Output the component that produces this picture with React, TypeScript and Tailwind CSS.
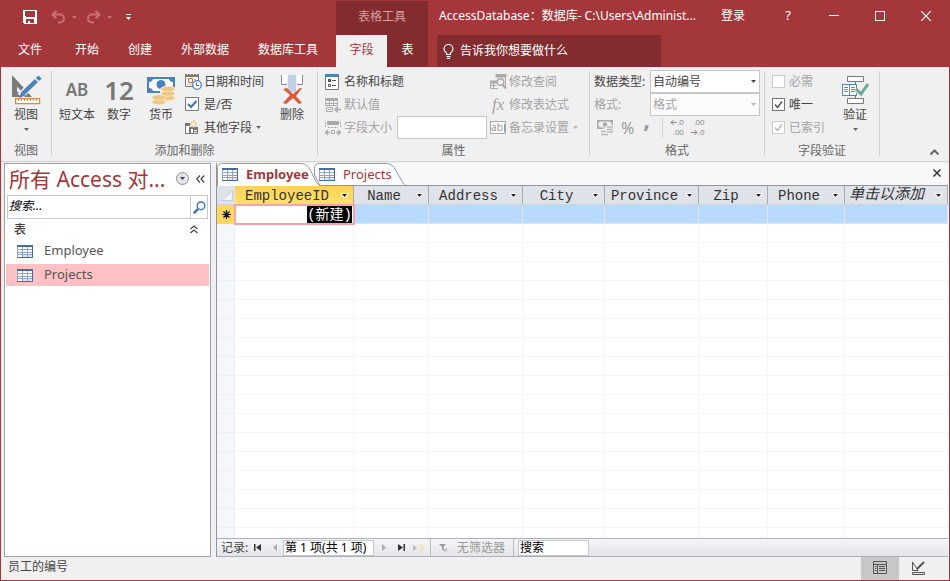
import { useState } from "react";
import type { ReactNode } from "react";
import { clsx } from "clsx";

const COLUMNS = [
  { name: "EmployeeID", width: "w-[119px]" },
  { name: "Name", width: "w-[75px]" },
  { name: "Address", width: "w-[94px]" },
  { name: "City", width: "w-[82px]" },
  { name: "Province", width: "w-[94px]" },
  { name: "Zip", width: "w-[69px]" },
  { name: "Phone", width: "w-[77px]" },
];

const MENU_TABS = ["开始", "创建", "外部数据", "数据库工具"];
const TABLES = ["Employee", "Projects"];
const EMPTY_ROWS = 60;

function Caret({ className }: { className?: string }) {
  return (
    <svg className={clsx("shrink-0", className)} width="5" height="3" viewBox="0 0 5 3" fill="currentColor">
      <path d="M0 0h5L2.5 3z" />
    </svg>
  );
}

/* ---------- Title bar icons ---------- */

function SaveIcon() {
  return (
    <svg width="14" height="14" viewBox="0 0 14 14" shapeRendering="crispEdges">
      <path fill="#fff" fillRule="evenodd" d="M0 0h14v14H1L0 13zM2 1v5l1 1h8l1-1V1zM3 9v4h2v-2h2v2h4V9z" />
    </svg>
  );
}

function UndoIcon({ flip }: { flip?: boolean }) {
  return (
    <svg
      className={flip ? "-scale-x-100" : undefined}
      width="15"
      height="14"
      viewBox="0 0 15 14"
      fill="none"
      stroke="#c9706f"
      strokeWidth="2"
    >
      <path d="M5.5 1 1.5 4.5l4 4M1.5 4.5H9a4 4 0 0 1 0 8H7" />
    </svg>
  );
}

function BulbIcon() {
  return (
    <svg width="11" height="15" viewBox="0 0 11 15" fill="none" stroke="#fff" strokeWidth="1.2">
      <path d="M3.5 10.5V9C2 8 1 6.7 1 5a4.5 4.5 0 0 1 9 0c0 1.7-1 3-2.5 4v1.5zM3.5 12.5h4M4 14.3h3" />
    </svg>
  );
}

/* ---------- Ribbon icons ---------- */

function DesignViewIcon() {
  return (
    <svg width="31" height="30" viewBox="0 0 31 30">
      <path fill="#7a7a7a" fillRule="evenodd" d="M1 0v22h20zM6 11.5V17h5z" />
      <path stroke="#f0f0f0" strokeWidth="7" d="m9 21 19-18" />
      <path stroke="#4a82bd" strokeWidth="4.5" d="M12 18.5 25.5 5.5M26.5 4.5 29 2" />
      <path fill="#4a82bd" d="m8 23 2.5-6.5 4 4z" />
      <path stroke="#f0f0f0" d="m24 3.5 4 4" />
      <path fill="#fff" stroke="#e0883c" strokeWidth="1.3" d="M4.6 23.6h24v5h-24z" />
      <path stroke="#e0883c" d="M7.5 24v2M10.5 24v2M13.5 24v2M16.5 24v2M19.5 24v2M22.5 24v2M25.5 24v2" />
    </svg>
  );
}

function CurrencyIcon() {
  return (
    <svg width="29" height="29" viewBox="0 0 29 29">
      <path fill="#4a82bd" d="M0 1h28v16H0z" />
      <path fill="#fff" d="M6 3h16a4 4 0 0 0 4 3v6a4 4 0 0 0-4 3H6a4 4 0 0 0-4-3V6a4 4 0 0 0 4-3z" />
      <circle cx="14" cy="8.5" r="4.5" fill="#4a82bd" />
      <path fill="#f0f0f0" d="M13 13c2-4 14-4 16 0v14H20v3H4v-9l4-3h5z" />
      <g fill="#efc67f" stroke="#f7ead0" strokeWidth=".8">
        <ellipse cx="21" cy="22" rx="7" ry="2.7" />
        <ellipse cx="21" cy="17.5" rx="7" ry="2.7" />
        <ellipse cx="21" cy="13" rx="7" ry="2.7" />
        <ellipse cx="12" cy="26" rx="7" ry="2.7" />
        <ellipse cx="12" cy="21.5" rx="7" ry="2.7" />
      </g>
    </svg>
  );
}

function DateIcon() {
  return (
    <svg width="17" height="17" viewBox="0 0 17 17">
      <path fill="#fff" stroke="#777" d="M.5 2.5h13v11H.5z" />
      <path fill="#777" d="M0 1h14v3H0z" />
      <path fill="#fff" d="M2 1h1v1H2zM5 1h1v1H5zM8 1h1v1H8zM11 1h1v1h-1z" />
      <path fill="#bbb" d="M9 6h2v1H9zM2 11h2v1H2zM5 11h2v1H5z" />
      <path fill="none" stroke="#e0702f" d="M3.5 5.5h4v4h-4z" />
      <circle cx="12" cy="12" r="4.3" fill="#fff" stroke="#4a82bd" strokeWidth="1.3" />
      <path fill="none" stroke="#666" d="M11.5 9.5v3H14" />
    </svg>
  );
}

function YesNoIcon() {
  return (
    <svg width="15" height="15" viewBox="0 0 15 15">
      <path fill="#fff" stroke="#777" d="M.5.5h13v13H.5z" />
      <path fill="none" stroke="#3f76b3" strokeWidth="2.2" d="m3 7 3 3 5.5-6" />
    </svg>
  );
}

function MoreFieldsIcon() {
  return (
    <svg width="15" height="15" viewBox="0 0 15 15">
      <path fill="#777" d="M0 3h5v3H0zM4 7h9v7H4zM0 6h1v8H0zM0 13h13v1H0z" />
      <path fill="#fff" d="M1 6h3v3H1zM1 10h3v3H1zM6 9h2v4H6zM9 10h3v1H9zM9 12h3v1H9z" />
      <path stroke="#f0b35f" d="M8.5 0v8M5 4h7M6 1.5l5 5M11 1.5l-5 5" />
      <circle cx="8.5" cy="4" r="1.5" fill="#fff" />
    </svg>
  );
}

function DeleteIcon() {
  return (
    <svg width="24" height="30" viewBox="0 0 24 30">
      <path fill="#fff" d="M1 0h6v9H1zM17 0h6v9h-6z" />
      <path fill="none" stroke="#8a8a8a" d="M1.5 0v9.5H7M22.5 0v9.5H17" />
      <path fill="#bed1e8" d="M8 0h8v17H8z" />
      <path fill="#dd5b3d" d="m3 14 4-1 6 6 7-6h2l-6 8 6 7-3 1-6-6-7 6-3-1 7-8z" />
    </svg>
  );
}

function CaptionIcon() {
  return (
    <svg width="15" height="16" viewBox="0 0 15 16">
      <path fill="#fff" stroke="#777" d="M.5.5h13v15H.5z" />
      <path fill="#4a82bd" d="M0 0h14v3H0z" />
      <path fill="none" stroke="#555" d="M7 6.5h4M7 11.5h4M3.5 10.5h2v2h-2z" />
      <path fill="#555" d="M3 5h3v3H3z" />
    </svg>
  );
}

function DefaultValueIcon() {
  return (
    <svg width="16" height="16" viewBox="0 0 16 16" fill="none" stroke="#aaa">
      <path fill="#aaa" d="M.5 1.5h12v2H.5z" />
      <path d="M.5 4.5v4h12v-4M4.5 4v4M8.5 4v4M.5 6.5h12" />
      <path d="M1.5 10.5h6v4h-6zM3 12.5h3" />
      <path strokeWidth="1.5" d="M16 12.5h-5.5M13 9.5l-3 3 3 3" />
    </svg>
  );
}

function FieldSizeIcon() {
  return (
    <svg width="16" height="16" viewBox="0 0 16 16" fill="none" stroke="#aaa">
      <path fill="#aaa" d="M2.5 1.5h11v3h-11z" />
      <path d="M.5 7V.5M15.5 7V.5M3 7.5h10" strokeDasharray="2 1" />
      <path d="M6.5 10.5h3v3h-3z" />
      <path strokeWidth="1.3" d="M5 12.5H1M3 10 .5 12.5 3 15M11 12.5h4M13 10l2.5 2.5L13 15" />
    </svg>
  );
}

function LookupIcon() {
  return (
    <svg width="17" height="16" viewBox="0 0 17 16" fill="none" stroke="#aaa">
      <path d="M6.5.5h9v13" />
      <path fill="#aaa" d="M6 0h10v3H6zM0 7h7v2H0z" />
      <path d="M.5 9v5.5H8M.5 11.5h6M3.5 9v5" />
      <circle cx="10.5" cy="8" r="3.3" fill="#f0f0f0" strokeWidth="1.4" />
      <path strokeWidth="2.2" d="m12.5 10.5 3.5 4" />
    </svg>
  );
}

function MemoIcon() {
  return (
    <span className="flex h-[13px] w-4 items-center justify-center gap-px border border-[#aaa] bg-[#fafafa] text-[10px] leading-[9px] text-[#999]">
      ab
      <span className="h-2 w-px bg-[#999]" />
    </span>
  );
}

function ValidationIcon() {
  return (
    <svg width="27" height="28" viewBox="0 0 27 28" fill="none">
      <path stroke="#777" d="M13.5 5v18" />
      <path fill="#fff" stroke="#777" d="M5.5.5h16v5h-16zM5.5 22.5h16v5h-16z" />
      <path fill="#fff" stroke="#4a82bd" d="M.5 8.5h14v11H.5z" />
      <path stroke="#888" d="M7.5 9v10M2 11.5h4M2 13.5h4M2 15.5h4M9 11.5h4M9 13.5h4M9 15.5h4" />
      <path stroke="#f0f0f0" strokeWidth="5" d="m14 13 5 5 6.5-9" />
      <path stroke="#6fa898" strokeWidth="3" d="m14 13 5 5 7-10" />
    </svg>
  );
}

function SmallCurrencyIcon() {
  return (
    <svg width="17" height="16" viewBox="0 0 17 16">
      <path fill="#aaa" d="M0 0h16v9H0z" />
      <path fill="#f0f0f0" d="M3 1.5h10l1.5 1.5v3L13 7.5H3L1.5 6V3z" />
      <circle cx="8" cy="4.5" r="2.2" fill="#aaa" />
      <path fill="#f0f0f0" d="M8 8 10 5h7v10H3v-5z" />
      <path stroke="#bbb" strokeWidth="1.5" d="M10 7h6M10 9.5h6M10 12h6M4 11.5h5M4 14.5h7" />
    </svg>
  );
}

function DecimalIcon({ increase }: { increase?: boolean }) {
  const arrow = (
    <svg width="7" height="7" viewBox="0 0 7 7" fill="none" stroke="currentColor">
      <path d={increase ? "M7 3.5H1M3.5 1 1 3.5 3.5 6" : "M0 3.5h6M3.5 1 6 3.5 3.5 6"} />
    </svg>
  );
  return (
    <span className="flex flex-col items-end font-['Liberation_Sans',sans-serif] text-[8px] leading-[10px] text-[#888]">
      <span className="flex h-[10px] items-center">{increase ? <>{arrow}.0</> : ".00"}</span>
      <span className="flex h-[10px] items-center">{increase ? ".00" : <>{arrow}.0</>}</span>
    </span>
  );
}

function TableIcon() {
  return (
    <svg className="shrink-0" width="16" height="13" viewBox="0 0 16 13" shapeRendering="crispEdges">
      <path fill="#8fa5c6" d="M0 0h16v13H0z" />
      <path fill="#466ba6" d="M0 0h16v2H0zM15 0h1v13h-1zM0 12h16v1H0z" />
      <path
        fill="#fff"
        d="M1 2h4v2H1zM6 2h4v2H6zM11 2h4v2h-4zM1 5h4v2H1zM6 5h4v2H6zM11 5h4v2h-4zM1 8h4v1H1zM6 8h4v1H6zM11 8h4v1h-4zM1 10h4v2H1z"
      />
      <path fill="#dce6f4" d="M6 10h4v2H6zM11 10h4v2h-4z" />
    </svg>
  );
}

function FilterIcon() {
  return (
    <svg width="9" height="8" viewBox="0 0 9 8" fill="#999">
      <path d="M0 0h7L4.5 3v4L3 5.5V3z" />
      <path stroke="#999" d="m5 4.5 3 3M8 4.5l-3 3" />
    </svg>
  );
}

/* ---------- Ribbon building blocks ---------- */

function RibbonGroup({ label, width, children }: { label: string; width: string; children: ReactNode }) {
  return (
    <section aria-label={label} className={clsx("flex shrink-0", width)}>
      <div className="flex min-w-0 flex-1 flex-col">
        <div className="flex flex-1 pt-[3px]">{children}</div>
        <div className="h-[21px] text-center leading-[22px] text-[#666]">{label}</div>
      </div>
      <div className="mt-1 mb-[5px] w-px bg-[#d2d2d2]" />
    </section>
  );
}

function LargeButton({ icon, label, menu }: { icon: ReactNode; label: string; menu?: boolean }) {
  return (
    <button type="button" className="flex w-[42px] shrink-0 flex-col items-center justify-start pt-1 text-[#444]">
      <span className="flex h-8 items-center justify-center">{icon}</span>
      <span className="leading-[18px] whitespace-nowrap">{label}</span>
      {menu && <Caret className="mt-1 text-[#666]" />}
    </button>
  );
}

type SmallButtonProps = { icon: ReactNode; label: string; menu?: boolean; disabled?: boolean };

function SmallButton({ icon, label, menu, disabled }: SmallButtonProps) {
  return (
    <button
      type="button"
      disabled={disabled}
      className={clsx("flex h-[23px] items-center whitespace-nowrap", disabled ? "text-[#a3a3a3]" : "text-[#444]")}
    >
      <span className="flex w-[19px] shrink-0 items-center">{icon}</span>
      {label}
      {menu && <Caret className={clsx("ml-1", disabled ? "text-[#b5b5b5]" : "text-[#666]")} />}
    </button>
  );
}

type CheckFieldProps = { id: string; label: string; checked?: boolean; disabled?: boolean };

function CheckField({ id, label, checked, disabled }: CheckFieldProps) {
  return (
    <div className={clsx("flex h-[23px] items-center gap-1", disabled ? "text-[#a3a3a3]" : "text-[#444]")}>
      <span className="relative flex">
        <input
          id={id}
          type="checkbox"
          defaultChecked={checked}
          disabled={disabled}
          className="peer size-[13px] appearance-none border border-[#777] bg-white disabled:border-[#ccc]"
        />
        <svg
          className={clsx("pointer-events-none absolute inset-0 hidden peer-checked:block", disabled && "opacity-40")}
          width="13"
          height="13"
          viewBox="0 0 13 13"
          fill="none"
          stroke="#555"
          strokeWidth="1.5"
        >
          <path d="m3 6.5 2.5 3L10 3.5" />
        </svg>
      </span>
      <label htmlFor={id}>{label}</label>
    </div>
  );
}

type SelectFieldProps = { id: string; label: string; value: string; disabled?: boolean };

function SelectField({ id, label, value, disabled }: SelectFieldProps) {
  return (
    <div className={clsx("flex h-[23px] items-center", disabled ? "text-[#a3a3a3]" : "text-[#444]")}>
      <label htmlFor={id} className="w-14 whitespace-nowrap">
        {label}
      </label>
      <span className="relative flex flex-1">
        <select
          id={id}
          disabled={disabled}
          className="h-[23px] w-full appearance-none border border-[#c6c6c6] bg-white pl-[2px] disabled:bg-[#fbfbfb]"
        >
          <option>{value}</option>
        </select>
        <Caret className={clsx("pointer-events-none absolute top-[10px] right-1", disabled && "text-[#b5b5b5]")} />
      </span>
    </div>
  );
}

/* ---------- Main regions ---------- */

function Header() {
  return (
    <header className="flex bg-[#a4373a] text-white">
      <div className="flex min-w-[335px] flex-col">
        <div className="flex h-[34px] items-center pb-[2px] pl-[22px] text-[#c9706f]">
          <button type="button" aria-label="保存" className="mr-3.5">
            <SaveIcon />
          </button>
          <button type="button" aria-label="撤消" className="mr-[6px]">
            <UndoIcon />
          </button>
          <Caret className="mr-[9px]" />
          <button type="button" aria-label="恢复" className="mr-[6px]">
            <UndoIcon flip />
          </button>
          <Caret className="mr-3.5" />
          <button type="button" aria-label="自定义快速访问工具栏" className="flex flex-col items-center gap-[2px] text-white">
            <span className="h-px w-[5px] bg-white" />
            <Caret />
          </button>
        </div>
        <nav className="flex h-8 gap-px pb-[2px]">
          <button type="button" className="pr-[18px] pl-[17px]">
            文件
          </button>
          {MENU_TABS.map((tab) => (
            <button key={tab} type="button" className="px-[14px]">
              {tab}
            </button>
          ))}
        </nav>
      </div>

      <div className="flex w-[92px] shrink-0 flex-col bg-[#822c2f]">
        <div className="h-[34px] text-center leading-[31px] text-[#d99c9d]">表格工具</div>
        <div className="flex h-8">
          <button type="button" className="w-[51px] bg-[#f0f0f0] pb-[2px] text-[#a4373a]">
            字段
          </button>
          <button type="button" className="flex-1 pb-[2px]">
            表
          </button>
        </div>
      </div>

      <div className="flex min-w-0 flex-1 flex-col">
        <div className="flex h-[34px] items-center pb-[5px] pl-[11px]">
          <h1 className="min-w-0 flex-1 truncate">AccessDatabase：数据库- C:\Users\Administ...</h1>
          <button type="button" className="mr-5">
            登录
          </button>
          <button type="button" aria-label="帮助" className="w-[46px] text-[13px]">
            ?
          </button>
          <button type="button" aria-label="最小化" className="flex w-[46px] justify-center">
            <span className="h-px w-[10px] bg-white" />
          </button>
          <button type="button" aria-label="最大化" className="flex w-[46px] justify-center">
            <span className="size-[10px] border border-white" />
          </button>
          <button type="button" aria-label="关闭" className="flex w-[46px] justify-center">
            <svg width="10" height="10" viewBox="0 0 10 10" stroke="#fff" strokeWidth="1.2">
              <path d="m0 0 10 10M10 0 0 10" />
            </svg>
          </button>
        </div>
        <label className="ml-[9px] flex h-8 w-56 items-center gap-1.5 bg-[#822c2f] pl-[6px]">
          <BulbIcon />
          <input
            type="text"
            aria-label="告诉我你想要做什么"
            placeholder="告诉我你想要做什么"
            className="min-w-0 flex-1 bg-transparent outline-none placeholder:text-white"
          />
        </label>
      </div>
    </header>
  );
}

function Ribbon() {
  return (
    <div className="flex h-[95px] shrink-0 border-b border-[#d2d2d2] bg-[#f0f0f0]">
      <RibbonGroup label="视图" width="w-[51px]">
        <div className="flex flex-1 justify-center">
          <LargeButton icon={<DesignViewIcon />} label="视图" menu />
        </div>
      </RibbonGroup>

      <RibbonGroup label="添加和删除" width="w-[266px]">
        <div className="flex pl-1">
          <LargeButton icon={<span className="text-[17px] font-semibold text-[#777]">AB</span>} label="短文本" />
          <LargeButton icon={<span className="text-[26px] font-semibold text-[#777]">12</span>} label="数字" />
          <LargeButton icon={<CurrencyIcon />} label="货币" />
          <div className="flex w-[89px] flex-col pl-[3px]">
            <SmallButton icon={<DateIcon />} label="日期和时间" />
            <SmallButton icon={<YesNoIcon />} label="是/否" />
            <SmallButton icon={<MoreFieldsIcon />} label="其他字段" menu />
          </div>
          <LargeButton icon={<DeleteIcon />} label="删除" />
        </div>
      </RibbonGroup>

      <RibbonGroup label="属性" width="w-[272px]">
        <div className="flex flex-1 pl-[7px]">
          <div className="w-[165px]">
            <SmallButton icon={<CaptionIcon />} label="名称和标题" />
            <SmallButton icon={<DefaultValueIcon />} label="默认值" disabled />
            <div className="flex h-[23px] items-center text-[#a3a3a3]">
              <span className="w-[19px] shrink-0">
                <FieldSizeIcon />
              </span>
              <label htmlFor="field-size" className="w-[53px] shrink-0">
                字段大小
              </label>
              <input
                id="field-size"
                type="text"
                className="h-[23px] w-[90px] shrink-0 border border-[#c6c6c6] bg-white"
              />
            </div>
          </div>
          <div>
            <SmallButton icon={<LookupIcon />} label="修改查阅" disabled />
            <SmallButton
              icon={<i className="pl-[2px] font-['Liberation_Serif',serif] text-[17px] leading-none">fx</i>}
              label="修改表达式"
              disabled
            />
            <SmallButton icon={<MemoIcon />} label="备忘录设置" menu disabled />
          </div>
        </div>
      </RibbonGroup>

      <RibbonGroup label="格式" width="w-[175px]">
        <div className="flex-1 pr-1 pl-1">
          <SelectField id="data-type" label="数据类型:" value="自动编号" />
          <SelectField id="format" label="格式:" value="格式" disabled />
          <div className="flex h-[23px] items-center pl-[3px] text-[#999]">
            <button type="button" disabled aria-label="应用货币格式" className="mr-[7px]">
              <SmallCurrencyIcon />
            </button>
            <button type="button" disabled className="mr-[9px] text-base">
              %
            </button>
            <button type="button" disabled className="mr-3 pb-[18px] text-[24px] leading-none font-bold">
              ,
            </button>
            <span className="mr-[7px] h-5 w-px bg-[#d2d2d2]" />
            <button type="button" disabled aria-label="增加小数位数" className="mr-[7px]">
              <DecimalIcon increase />
            </button>
            <button type="button" disabled aria-label="减少小数位数">
              <DecimalIcon />
            </button>
          </div>
        </div>
      </RibbonGroup>

      <RibbonGroup label="字段验证" width="w-[115px]">
        <div className="flex pl-[7px]">
          <div className="w-[62px]">
            <CheckField id="required" label="必需" disabled />
            <CheckField id="unique" label="唯一" checked />
            <CheckField id="indexed" label="已索引" checked disabled />
          </div>
          <LargeButton icon={<ValidationIcon />} label="验证" menu />
        </div>
      </RibbonGroup>

      <button type="button" aria-label="折叠功能区" className="mt-auto mr-2.5 mb-1.5 ml-auto text-[#666]">
        <svg width="9" height="6" viewBox="0 0 9 6" fill="none" stroke="currentColor" strokeWidth="2">
          <path d="m.5 5.5 4-4 4 4" />
        </svg>
      </button>
    </div>
  );
}

function NavigationPane({ selected, onSelect }: { selected: string; onSelect: (name: string) => void }) {
  return (
    <aside className="mt-px ml-[3px] flex w-[207px] shrink-0 flex-col border border-[#9aa3af] bg-white">
      <div className="flex h-[31px] items-center pb-[2px] pl-1">
        <h2 className="flex-1 text-[21px] leading-7 whitespace-nowrap text-[#a4373a]">所有 Access 对...</h2>
        <button
          type="button"
          aria-label="筛选"
          className="mr-[7px] flex size-[13px] shrink-0 items-center justify-center rounded-full border border-[#8a8f99] bg-[#e3e5ea] text-[#444]"
        >
          <Caret />
        </button>
        <button type="button" aria-label="折叠导航窗格" className="mr-[5px] text-[#444]">
          <svg width="9" height="8" viewBox="0 0 9 8" fill="none" stroke="currentColor" strokeWidth="1.2">
            <path d="M4 .5.8 4 4 7.5M8.2.5 5 4l3.2 3.5" />
          </svg>
        </button>
      </div>
      <div className="mr-[2px] ml-[2px] flex h-6 border border-[#c9c9c9]">
        <input
          type="search"
          aria-label="搜索"
          placeholder="搜索..."
          className="min-w-0 flex-1 pb-[2px] pl-[1px] italic outline-none placeholder:text-black"
        />
        <button type="button" aria-label="执行搜索" className="flex w-[17px] items-center justify-center border-l border-[#c9c9c9]">
          <svg width="13" height="13" viewBox="0 0 13 13" fill="none" stroke="#3f76b3">
            <circle cx="8" cy="4.8" r="3.8" strokeWidth="1.4" />
            <path strokeWidth="2.5" d="M5 8 .8 12.2" />
          </svg>
        </button>
      </div>
      <div className="flex h-[21px] items-center pl-[9px] text-[#444]">
        <h3 className="flex-1 font-medium">表</h3>
        <svg className="mr-3" width="8" height="9" viewBox="0 0 8 9" fill="none" stroke="currentColor" strokeWidth="1.2">
          <path d="m.5 4 3.5-3 3.5 3M.5 8 4 5l3.5 3" />
        </svg>
      </div>
      <ul className="flex flex-col gap-[2px] px-px">
        {TABLES.map((name) => (
          <li key={name}>
            <button
              type="button"
              onClick={() => onSelect(name)}
              className={clsx(
                "flex h-[22px] w-full items-center gap-[11px] pl-[11px] text-[13px] text-[#555]",
                name === selected && "bg-[#ffc1c4]"
              )}
            >
              <TableIcon />
              {name}
            </button>
          </li>
        ))}
      </ul>
    </aside>
  );
}

function DocumentTabs() {
  return (
    <div role="tablist" className="flex h-[23px] shrink-0 items-end border-b border-[#8d97a3] bg-[#f8f8f8] text-[13px] text-[#a4373a]">
      <button type="button" role="tab" aria-selected="true" className="relative z-10 -mb-px flex h-[23px] w-[97px] items-center pl-[5px] font-bold">
        <svg className="absolute top-0 left-0" width="108" height="23" viewBox="0 0 108 23">
          <path
            fill="#fff"
            stroke="#a89a8a"
            d="M.5 23V4.5Q.5.5 4.5.5H84c5 0 8 4 10 8l4 8c2 4 3 6 7 6"
          />
          <path fill="#fff" d="M1 22h101v1H1z" />
        </svg>
        <span className="relative flex items-center gap-2">
          <TableIcon />
          Employee
        </span>
      </button>
      <button type="button" role="tab" aria-selected="false" className="relative -mb-px flex h-[23px] w-[92px] items-center pl-[5px]">
        <svg className="absolute top-0 left-0" width="94" height="23" viewBox="0 0 94 23">
          <path
            fill="#fff"
            stroke="#8d97a3"
            d="M.5 12V5.5Q.5.5 5.5.5H72c5 0 8 3 10 7l5 9c2 4 3 6 6 6H6z"
          />
        </svg>
        <span className="relative flex items-center gap-2">
          <TableIcon />
          Projects
        </span>
      </button>
      <button type="button" aria-label="关闭对象" className="mr-[7px] mb-2 ml-auto">
        <svg width="8" height="8" viewBox="0 0 8 8" stroke="#333" strokeWidth="1.5">
          <path d="m.5.5 7 7M7.5.5l-7 7" />
        </svg>
      </button>
    </div>
  );
}

function ColumnHeader({ name, active, italic }: { name: string; active?: boolean; italic?: boolean }) {
  return (
    <th
      scope="col"
      className={clsx(
        "h-[19px] border-r border-b border-r-[#a4abb5] border-b-[#d0d4da] p-0 font-normal",
        active ? "bg-linear-to-b from-[#ffd254] to-[#ffe06e]" : "bg-[#dfe2e8]"
      )}
    >
      <div className="flex h-[18px] items-center">
        <span
          className={clsx(
            "flex-1 pt-[2px] leading-[16px] whitespace-nowrap",
            italic ? "pl-1 text-left text-[15px] italic" : "pl-1 text-center text-[14px]"
          )}
        >
          {name}
        </span>
        <button type="button" aria-label={`${name} 筛选`} className="flex w-[18px] shrink-0 justify-center pt-px text-[#222]">
          <svg width="9" height="5" viewBox="0 0 9 5">
            <path fill="#fff" d="M0 0h9L5 5H4z" />
            <path fill="currentColor" d="M2 1h5L4.5 4z" />
          </svg>
        </button>
      </div>
    </th>
  );
}

function Datasheet() {
  return (
    <div className="min-h-0 flex-1 overflow-hidden bg-white font-['Liberation_Mono','Noto_Sans_CJK_SC',monospace] text-[#333]">
      <table className="w-full table-fixed border-separate border-spacing-0">
        <colgroup>
          <col className="w-[18px]" />
          {COLUMNS.map((column) => (
            <col key={column.name} className={column.width} />
          ))}
          <col />
        </colgroup>
        <thead>
          <tr>
            <th aria-label="全选" className="h-[19px] border-b border-[#d0d4da] bg-[#dfe2e8] p-0">
              <svg className="ml-1" width="12" height="11" viewBox="0 0 12 11">
                <path fill="#eff2f8" stroke="#c3cddd" d="M11.5.5v10H.5z" />
              </svg>
            </th>
            {COLUMNS.map((column, index) => (
              <ColumnHeader key={column.name} name={column.name} active={index === 0} />
            ))}
            <ColumnHeader name="单击以添加" italic />
          </tr>
        </thead>
        <tbody>
          <tr>
            <th scope="row" aria-label="新记录" className="h-[19px] bg-[#ffd85f] p-0">
              <svg className="mx-auto" width="9" height="9" viewBox="0 0 9 9" stroke="#111" strokeWidth="1.2">
                <path d="M4.5 0v9M0 4.5h9M1.5 1.5l6 6M7.5 1.5l-6 6" />
              </svg>
            </th>
            <td className="h-[19px] bg-white p-0 text-right text-[14px] leading-[17px] outline-2 -outline-offset-1 outline-[#f5a3a7]">
              <span className="mr-[2px] inline-block h-[17px] bg-black align-top leading-[18px] text-white">(新建)</span>
            </td>
            {COLUMNS.map((column) => (
              <td key={column.name} className="h-[19px] border-r border-b border-[#e4e4e4] bg-[#b8daff] p-0" />
            ))}
          </tr>
          {Array.from({ length: EMPTY_ROWS }, (_, row) => (
            <tr key={row}>
              <td className="h-[19px] border-r border-b border-[#efeff5] bg-[#f6f6fd] p-0" />
              {COLUMNS.map((column) => (
                <td key={column.name} className="h-[19px] border-r border-b border-[#f5f5f5] p-0" />
              ))}
              <td className="h-[19px] border-b border-[#f5f5f5] p-0" />
            </tr>
          ))}
        </tbody>
      </table>
    </div>
  );
}

function RecordNavigator() {
  return (
    <div className="flex h-[19px] shrink-0 items-center border-t border-b border-[#a9b0ba] bg-linear-to-b from-[#f4f5f7] to-[#e4e6ea] text-[#444]">
      <span className="w-[37px] shrink-0 pl-1 whitespace-nowrap">记录:</span>
      <button type="button" aria-label="第一条记录" className="mr-3">
        <svg width="7" height="7" viewBox="0 0 7 7" fill="#333">
          <path d="M0 0h1.5v7H0zM7 0v7L2 3.5z" />
        </svg>
      </button>
      <button type="button" aria-label="上一条记录" className="mr-[6px]" disabled>
        <svg width="4" height="7" viewBox="0 0 4 7" fill="#aaa">
          <path d="M4 0v7L0 3.5z" />
        </svg>
      </button>
      <input
        type="text"
        aria-label="当前记录"
        defaultValue="第 1 项(共 1 项)"
        className="h-[16px] w-[91px] border border-[#c3c7cd] bg-white pl-px text-black"
      />
      <button type="button" aria-label="下一条记录" className="mr-3 ml-2" disabled>
        <svg width="4" height="7" viewBox="0 0 4 7" fill="#aaa">
          <path d="M0 0v7l4-3.5z" />
        </svg>
      </button>
      <button type="button" aria-label="最后一条记录" className="mr-2">
        <svg width="7" height="7" viewBox="0 0 7 7" fill="#333">
          <path d="M5.5 0H7v7H5.5zM0 0v7l5-3.5z" />
        </svg>
      </button>
      <button type="button" aria-label="新建记录" className="mr-[5px]" disabled>
        <svg width="12" height="8" viewBox="0 0 12 8">
          <path fill="#bbb" d="M0 1v6l4-3z" />
          <path stroke="#f3e2ad" d="M8.5 0v8M5 4h7M6 1l5 6M11 1 6 7" />
        </svg>
      </button>
      <span className="h-full w-px bg-[#b9bec6]" />
      <button type="button" disabled className="flex items-center gap-[9px] px-2 text-[#999]">
        <FilterIcon />
        无筛选器
      </button>
      <span className="h-full w-px bg-[#b9bec6]" />
      <input
        type="text"
        aria-label="搜索记录"
        defaultValue="搜索"
        className="ml-1 h-[16px] w-[71px] border border-[#c3c7cd] bg-white pl-px text-black"
      />
    </div>
  );
}

function StatusBar() {
  return (
    <footer className="flex h-[23px] shrink-0 items-center bg-[#f0f0f0] pl-[7px] text-[#444]">
      <span className="flex-1 pb-1">员工的编号</span>
      <button type="button" aria-label="数据表视图" className="flex h-full w-[38px] items-center justify-center bg-[#c8c8c8] pb-[2px]">
        <svg width="14" height="13" viewBox="0 0 14 13" fill="none" stroke="#555">
          <path d="M.5.5h13v12H.5zM.5 3.5h13M4.5 3.5v9M6 5.5h6M6 7.5h6M6 9.5h6M2 5.5h1.5M2 7.5h1.5M2 9.5h1.5" />
        </svg>
      </button>
      <button type="button" aria-label="设计视图" className="flex h-full w-[38px] items-center justify-center pb-[2px]">
        <svg width="15" height="14" viewBox="0 0 15 14" fill="none" stroke="#555">
          <path d="M1.5 1v8.5H7z" />
          <path strokeWidth="2" d="m6 8 7-7" />
          <path d="M1.5 11.5h12v2h-12z" />
        </svg>
      </button>
      <span className="w-3" />
    </footer>
  );
}

export default function App() {
  const [selected, setSelected] = useState("Projects");

  return (
    <div className="flex h-screen flex-col overflow-hidden border border-[#a4373a] bg-[#f0f0f0] font-['Noto_Sans','Noto_Sans_CJK_SC',sans-serif] text-xs">
      <Header />
      <Ribbon />
      <main className="flex min-h-0 flex-1">
        <NavigationPane selected={selected} onSelect={setSelected} />
        <div className="mt-px ml-[5px] flex min-w-0 flex-1 flex-col border-l border-[#8d97a3] bg-[#f8f8f8] pr-px">
          <DocumentTabs />
          <Datasheet />
          <RecordNavigator />
        </div>
      </main>
      <StatusBar />
    </div>
  );
}
